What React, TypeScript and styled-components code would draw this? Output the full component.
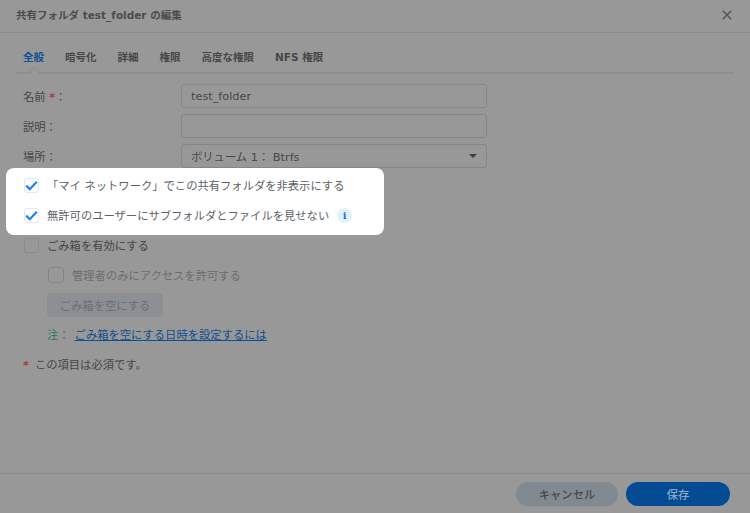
import React from "react";
import styled, { createGlobalStyle } from "styled-components";

const Global = createGlobalStyle`
  html, body { margin: 0; padding: 0; background: #989898; }
  body { font-family: "DejaVu Sans", "Noto Sans CJK JP", sans-serif; font-size: 12px; color: #474747; }
`;

const Dialog = styled.div`
  width: 750px;
  height: 513px;
  display: flex;
  flex-direction: column;
  overflow: hidden;
  background: #989898;
`;

const TitleBar = styled.header`
  height: 33px;
  flex: none;
  box-sizing: border-box;
  display: flex;
  align-items: center;
  justify-content: space-between;
  padding: 0 18px 3px 16px;
  border-bottom: 1px solid #8c8c8e;
`;

const Title = styled.h1`
  margin: 0;
  font-size: 10.5px;
  font-weight: 700;
  color: #4c4c4c;
`;

const Close = styled.button`
  display: flex;
  padding: 0;
  border: 0;
  background: none;
  color: #555;
`;

const TabBar = styled.nav`
  margin: 0 16px;
  height: 41px;
  flex: none;
  display: flex;
  align-items: flex-end;
  gap: 21px;
  padding: 0 7px 8px;
  box-sizing: border-box;
  border-bottom: 2px solid #8e8e8e;
`;

const Tab = styled.span<{ $active?: boolean }>`
  font-size: 10.5px;
  font-weight: 700;
  line-height: 14px;
  color: ${(p) => (p.$active ? "#0e4f93" : "#474747")};
  position: relative;
  ${(p) =>
    p.$active &&
    `&::after {
      content: "";
      position: absolute;
      left: 50%;
      bottom: -11px;
      width: 6px;
      height: 6px;
      margin-left: -3px;
      background: #989898;
      border-top: 1px solid #8e8e8e;
      border-left: 1px solid #8e8e8e;
      transform: rotate(45deg);
    }`}
`;

const Form = styled.main`
  flex: 1;
  display: flex;
  flex-direction: column;
  padding-top: 10px;
`;

const Fields = styled.div`
  display: flex;
  flex-direction: column;
  gap: 6px;
  padding-left: 23px;
`;

const Row = styled.div`
  display: flex;
  align-items: center;
  height: 24px;
`;

const Label = styled.label`
  width: 158px;
  flex: none;
  font-size: 11.3px;
  color: #474747;
`;

const Star = styled.span`
  color: #a33a3a;
  font-weight: 700;
`;

const Field = styled.div`
  width: 306px;
  height: 24px;
  box-sizing: border-box;
  border: 1px solid #858590;
  border-radius: 3px;
  display: flex;
  align-items: center;
  justify-content: space-between;
  padding: 0 10px 0 9px;
  font-size: 11.3px;
  color: #474747;
`;

const Caret = styled.i`
  width: 0;
  height: 0;
  border-left: 4px solid transparent;
  border-right: 4px solid transparent;
  border-top: 4px solid #3c3c3c;
  margin-right: -1px;
`;

const Highlight = styled.section`
  width: 378px;
  height: 67px;
  margin: 0 0 2px 6px;
  box-sizing: border-box;
  background: #fff;
  border-radius: 8px;
  display: flex;
  flex-direction: column;
  padding: 9px 0 0 18px;
  gap: 14px;
`;

const CheckRow = styled.div`
  display: flex;
  align-items: center;
  height: 16px;
  font-size: 11.3px;
  gap: 8px;
  white-space: nowrap;
`;

const Box = styled.span<{ $bright?: boolean; $nested?: boolean }>`
  width: ${(p) => (p.$nested ? "16px" : "15px")};
  height: ${(p) => (p.$nested ? "16px" : "15px")};
  flex: none;
  display: flex;
  align-items: center;
  justify-content: center;
  box-sizing: border-box;
  border-radius: 3px;
  border: 1px solid ${(p) => (p.$bright ? "#e3e7ef" : p.$nested ? "#84848c" : "#8a8a8e")};
`;

const HighlightText = styled.span`
  color: #5c6168;
`;

const InfoBadge = styled.span`
  width: 15px;
  height: 15px;
  border-radius: 50%;
  background: #e4f0fb;
  color: #1a78d0;
  font-family: "DejaVu Serif", serif;
  font-size: 10px;
  font-weight: 700;
  display: flex;
  align-items: center;
  justify-content: center;
`;

const Lower = styled.div`
  display: flex;
  flex-direction: column;
  padding-left: 24px;
`;

const Nested = styled.div`
  display: flex;
  flex-direction: column;
  padding: 14px 0 0 24px;
`;

const MutedText = styled.span`
  color: #6d6d6d;
`;

const EmptyButton = styled.button`
  width: 116px;
  height: 24px;
  margin: 10px 0 0 -1px;
  padding: 0;
  border: 0;
  border-radius: 3px;
  background: #8c9094;
  color: #6a6e72;
  font: inherit;
  font-size: 11.3px;
`;

const Note = styled.p`
  margin: 11px 0 0 -1px;
  font-size: 11.3px;
  line-height: 16px;
  color: #2a7468;
`;

const Link = styled.a`
  margin-left: 5px;
  color: #0e4f93;
  text-decoration: underline;
`;

const Required = styled.p`
  margin: 14px 0 0 -1px;
  font-size: 11.3px;
  line-height: 16px;
  color: #474747;
  display: flex;
  gap: 6px;
`;

const Footer = styled.footer`
  height: 40px;
  flex: none;
  box-sizing: border-box;
  display: flex;
  justify-content: flex-end;
  gap: 8px;
  padding: 8px 20px 0 0;
  border-top: 1px solid #8c8c8c;
`;

const Pill = styled.button<{ $primary?: boolean }>`
  width: ${(p) => (p.$primary ? "104px" : "102px")};
  height: 24px;
  padding: 0;
  border: 0;
  border-radius: 12px;
  background: ${(p) => (p.$primary ? "#034b92" : "#818a90")};
  color: ${(p) => (p.$primary ? "#8da8c6" : "#474747")};
  font: inherit;
  font-size: 11.3px;
  font-weight: 500;
`;

const Check = () => (
  <svg width="13" height="11" viewBox="0 0 13 11" fill="none">
    <path d="M1.2 5.6 L4.8 9.2 L11.8 1.8" stroke="#1a84f0" strokeWidth="2.2" />
  </svg>
);

const X = () => (
  <svg width="10" height="10" viewBox="0 0 10 10" fill="none">
    <path d="M0.8 0.8 L9.2 9.2 M9.2 0.8 L0.8 9.2" stroke="currentColor" strokeWidth="1.5" />
  </svg>
);

export default function App() {
  return (
    <Dialog>
      <Global />
      <TitleBar>
        <Title>共有フォルダ test_folder の編集</Title>
        <Close aria-label="閉じる"><X /></Close>
      </TitleBar>
      <TabBar>
        <Tab $active>全般</Tab>
        <Tab>暗号化</Tab>
        <Tab>詳細</Tab>
        <Tab>権限</Tab>
        <Tab>高度な権限</Tab>
        <Tab>NFS 権限</Tab>
      </TabBar>
      <Form>
        <Fields>
          <Row>
            <Label>名前 <Star>*</Star>：</Label>
            <Field>test_folder</Field>
          </Row>
          <Row>
            <Label>説明：</Label>
            <Field />
          </Row>
          <Row>
            <Label>場所：</Label>
            <Field>ボリューム 1： Btrfs<Caret /></Field>
          </Row>
        </Fields>
        <Highlight>
          <CheckRow>
            <Box $bright><Check /></Box>
            <HighlightText>「マイ ネットワーク」でこの共有フォルダを非表示にする</HighlightText>
          </CheckRow>
          <CheckRow>
            <Box $bright><Check /></Box>
            <HighlightText>無許可のユーザーにサブフォルダとファイルを見せない</HighlightText>
            <InfoBadge>i</InfoBadge>
          </CheckRow>
        </Highlight>
        <Lower>
          <CheckRow>
            <Box />
            <span>ごみ箱を有効にする</span>
          </CheckRow>
          <Nested>
            <CheckRow>
              <Box $nested />
              <MutedText>管理者のみにアクセスを許可する</MutedText>
            </CheckRow>
            <EmptyButton>ごみ箱を空にする</EmptyButton>
            <Note>注：<Link>ごみ箱を空にする日時を設定するには</Link></Note>
          </Nested>
          <Required><Star>*</Star><span>この項目は必須です。</span></Required>
        </Lower>
      </Form>
      <Footer>
        <Pill>キャンセル</Pill>
        <Pill $primary>保存</Pill>
      </Footer>
    </Dialog>
  );
}
